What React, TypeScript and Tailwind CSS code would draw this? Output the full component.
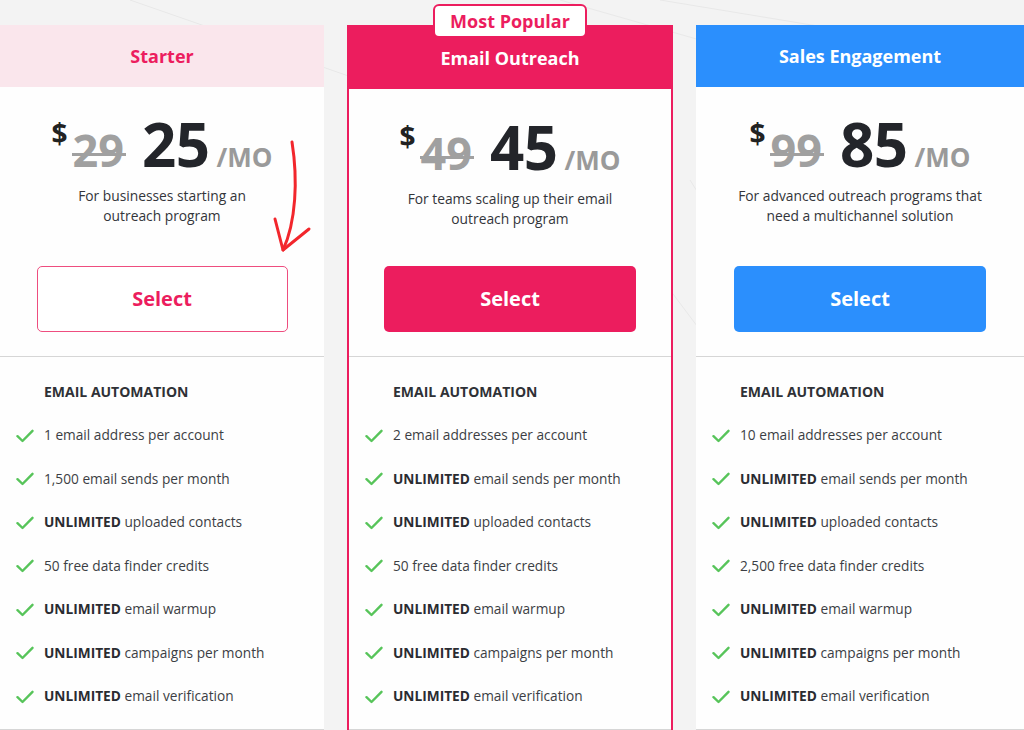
import React from "react";

type Feature = { bold?: string; text: string };

const features1: Feature[] = [
  { text: "1 email address per account" },
  { text: "1,500 email sends per month" },
  { bold: "UNLIMITED", text: " uploaded contacts" },
  { text: "50 free data finder credits" },
  { bold: "UNLIMITED", text: " email warmup" },
  { bold: "UNLIMITED", text: " campaigns per month" },
  { bold: "UNLIMITED", text: " email verification" },
];
const features2: Feature[] = [
  { text: "2 email addresses per account" },
  { bold: "UNLIMITED", text: " email sends per month" },
  { bold: "UNLIMITED", text: " uploaded contacts" },
  { text: "50 free data finder credits" },
  { bold: "UNLIMITED", text: " email warmup" },
  { bold: "UNLIMITED", text: " campaigns per month" },
  { bold: "UNLIMITED", text: " email verification" },
];
const features3: Feature[] = [
  { text: "10 email addresses per account" },
  { bold: "UNLIMITED", text: " email sends per month" },
  { bold: "UNLIMITED", text: " uploaded contacts" },
  { text: "2,500 free data finder credits" },
  { bold: "UNLIMITED", text: " email warmup" },
  { bold: "UNLIMITED", text: " campaigns per month" },
  { bold: "UNLIMITED", text: " email verification" },
];

function Check() {
  return (
    <svg width="18" height="14" viewBox="0 0 18 14" className="shrink-0">
      <path d="M1.5 7.2 L6.5 12 L16.5 1.8" fill="none" stroke="#57c45a" strokeWidth="2.4" strokeLinecap="round" strokeLinejoin="round" />
    </svg>
  );
}

function Price({ old, now }: { old: string; now: string }) {
  return (
    <div className="flex items-baseline leading-none">
      <span className="self-start mt-[5px] text-[28px] font-bold text-[#222]">$</span>
      <span className="ml-[5px] text-[45px] font-bold text-[#a0a0a0] relative">
        {old}
        <span className="absolute left-0 right-[-2px] top-[26px] h-[3px] bg-[#a0a0a0]" />
      </span>
      <span className="ml-[18px] text-[60px] font-bold text-[#23252a] tracking-[-0.5px]">{now}</span>
      <span className="ml-[7px] text-[26px] font-bold text-[#9a9a9a]">/MO</span>
    </div>
  );
}

function Features({ items }: { items: Feature[] }) {
  return (
    <div className="pl-[16px] pt-[25px] border-b border-[#d6d6d6] pb-[10px]">
      <div className="pl-[28px] text-[14px] leading-[20px] font-bold text-[#2f3136]">EMAIL AUTOMATION</div>
      <div className="mt-[12px] flex flex-col">
        {items.map((f, i) => (
          <div key={i} className="h-[43.5px] flex items-center gap-[10px] text-[13.7px] text-[#3c3e44]">
            <Check />
            <span className="whitespace-nowrap">
              {f.bold && <b className="font-bold text-[#2a2c31]">{f.bold}</b>}
              {f.text}
            </span>
          </div>
        ))}
      </div>
    </div>
  );
}

export default function App() {
  return (
    <div
      className="relative w-[1024px] h-[730px] overflow-hidden bg-[#f3f3f3]"
      style={{ fontFamily: "'Open Sans', 'Noto Sans', sans-serif" }}
    >
      {/* faint background lines */}
      <svg className="absolute inset-0" width="1024" height="730">
        <g stroke="#e8e8e8" strokeWidth="1" fill="none">
          <path d="M130 0 L360 80" />
          <path d="M660 0 L1024 60" />
          <path d="M640 250 L700 330" />
          <path d="M560 0 L700 40" />
          <path d="M690 180 L740 260" />
        </g>
      </svg>

      <div className="relative flex gap-[23px] pt-[25px]">
        {/* Card 1 */}
        <div className="w-[324px] shrink-0 bg-[#fefefe] flex flex-col">
          <div className="h-[62px] bg-[#fae6ec] flex items-center justify-center text-[18px] font-bold text-[#ec1d5e]">
            Starter
          </div>
          <div className="h-[270px] flex flex-col items-center border-b border-[#d6d6d6] pt-[27px]">
            <Price old="29" now="25" />
            <p className="mt-[12px] text-center text-[13.8px] leading-[20px] text-[#33353a]">
              For businesses starting an
              <br />
              outreach program
            </p>
            <button className="mt-auto mb-[24px] w-[251px] h-[66px] rounded-[5px] border-[1.5px] border-[#ee4d7f] bg-white text-[20px] font-bold text-[#ec1d5e]">
              Select
            </button>
          </div>
          <Features items={features1} />
        </div>

        {/* Card 2 */}
        <div className="relative w-[326px] shrink-0 bg-[#fefefe] flex flex-col border-2 border-[#ec1d5e]">
          <div className="absolute left-1/2 -translate-x-1/2 -top-[23px] w-[154px] h-[34px] rounded-[6px] border-2 border-[#ec1d5e] bg-white flex items-center justify-center text-[18px] font-bold text-[#ec1d5e]">
            Most Popular
          </div>
          <div className="h-[62px] bg-[#ec1d5e] flex items-center justify-center text-[18px] font-bold text-white">
            Email Outreach
          </div>
          <div className="h-[268px] flex flex-col items-center border-b border-[#d6d6d6] pt-[28px]">
            <Price old="49" now="45" />
            <p className="mt-[12px] text-center text-[13.8px] leading-[20px] text-[#33353a]">
              For teams scaling up their email
              <br />
              outreach program
            </p>
            <button className="mt-auto mb-[24px] w-[252px] h-[66px] rounded-[5px] bg-[#ec1d5e] text-[20px] font-bold text-white">
              Select
            </button>
          </div>
          <Features items={features2} />
        </div>

        {/* Card 3 */}
        <div className="w-[328px] shrink-0 bg-[#fefefe] flex flex-col">
          <div className="h-[62px] bg-[#2b8ffd] flex items-center justify-center text-[18px] font-bold text-white">
            Sales Engagement
          </div>
          <div className="h-[270px] flex flex-col items-center border-b border-[#d6d6d6] pt-[27px]">
            <Price old="99" now="85" />
            <p className="mt-[12px] text-center text-[13.8px] leading-[20px] text-[#33353a]">
              For advanced outreach programs that
              <br />
              need a multichannel solution
            </p>
            <button className="mt-auto mb-[24px] w-[252px] h-[66px] rounded-[5px] bg-[#2b8ffd] text-[20px] font-bold text-white">
              Select
            </button>
          </div>
          <Features items={features3} />
        </div>
      </div>

      {/* hand-drawn arrow */}
      <svg className="absolute left-0 top-0 pointer-events-none" width="1024" height="730">
        <g stroke="#f2262c" strokeWidth="3" fill="none" strokeLinecap="round" strokeLinejoin="round">
          <path d="M292 142 C 298 180, 296 222, 283 250" />
          <path d="M275 219 L283 250 L309 229" />
        </g>
      </svg>
    </div>
  );
}
